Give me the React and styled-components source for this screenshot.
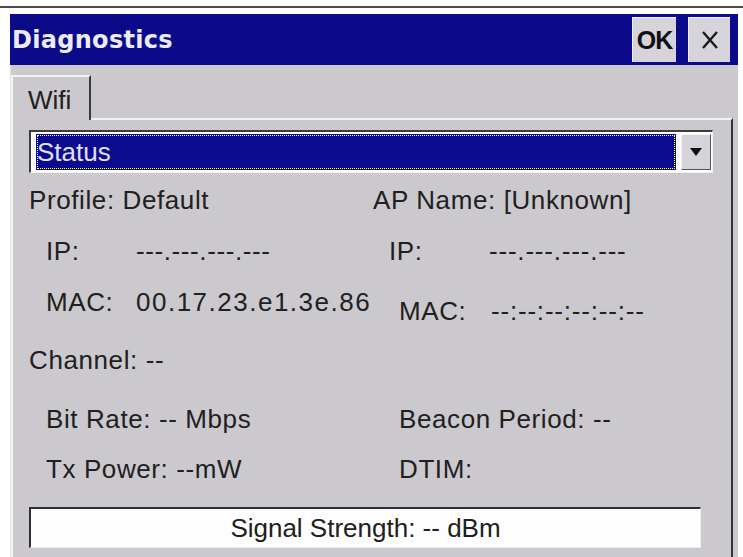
import React from "react";
import styled, { createGlobalStyle } from "styled-components";

const GlobalStyle = createGlobalStyle`
  html, body {
    margin: 0;
    padding: 0;
    background: #ffffff;
  }
  body {
    font-family: "Liberation Sans", Arial, sans-serif;
    color: #202020;
  }
`;

const Screen = styled.div`
  width: 743px;
  height: 557px;
  overflow: hidden;
  padding-top: 6px;
  box-sizing: border-box;
`;

const Window = styled.div`
  border-top: 2px solid #4c4c4c;
  padding: 6px 5px 0 10px;
  height: 100%;
  box-sizing: border-box;
  display: flex;
  flex-direction: column;
`;

const TitleBar = styled.div`
  height: 51px;
  flex: none;
  background: #0b0b8a;
  display: flex;
  align-items: center;
  justify-content: space-between;
  padding: 0 8px 0 2px;
`;

const Title = styled.span`
  font-family: "DejaVu Sans", sans-serif;
  font-weight: bold;
  font-size: 24px;
  letter-spacing: 0.3px;
  color: #ecebf7;
`;

const Buttons = styled.div`
  display: flex;
  gap: 12px;
`;

const TitleButton = styled.button`
  width: ${(p) => p.$w}px;
  height: 45px;
  padding: 0;
  margin: 0;
  background: #d6d3da;
  border: none;
  border-top: 1px solid #f2f1f4;
  border-left: 1px solid #f2f1f4;
  display: flex;
  align-items: center;
  justify-content: center;
  font-family: "Liberation Sans", Arial, sans-serif;
  font-weight: bold;
  font-size: 25px;
  letter-spacing: -1px;
  color: #111;
`;

const Body = styled.div`
  flex: 1;
  background: #ccc9ce;
  border-left: 1px solid #e4e2e6;
  padding: 10px 5px 0 0;
  display: flex;
  flex-direction: column;
`;

const Tab = styled.div`
  width: 80px;
  height: 45px;
  box-sizing: border-box;
  border-top: 2px solid #f3f2f5;
  border-left: 2px solid #f3f2f5;
  border-right: 2px solid #3a3a3a;
  background: #ccc9ce;
  display: flex;
  align-items: center;
  padding-left: 15px;
  padding-top: 3px;
  font-size: 26px;
  position: relative;
  z-index: 1;
  margin-bottom: -2px;
`;

const Panel = styled.div`
  flex: 1;
  border-top: 2px solid #f3f2f5;
  border-left: 2px solid #f3f2f5;
  border-right: 2px solid #333333;
  padding: 10px 18px 0 16px;
  display: flex;
  flex-direction: column;
`;

const Select = styled.div`
  height: 43px;
  box-sizing: border-box;
  border-top: 2px solid #3c3c3c;
  border-left: 2px solid #3c3c3c;
  border-right: 1px solid #f4f4f4;
  border-bottom: 1px solid #f4f4f4;
  background: #ffffff;
  display: flex;
  align-items: stretch;
  padding: 2px 1px 2px 5px;
  gap: 5px;
`;

const Selected = styled.div`
  flex: 1;
  background: #0b0b8e;
  outline: 1px dotted #ffffff;
  outline-offset: -2px;
  color: #e2e0f5;
  font-size: 26px;
  display: flex;
  align-items: center;
  padding-left: 1px;
`;

const DropButton = styled.div`
  width: 28px;
  background: #d6d3da;
  border: 1px solid #555;
  border-top-color: #f4f4f4;
  border-left-color: #f4f4f4;
  display: flex;
  align-items: center;
  justify-content: center;
`;

const Row = styled.div`
  height: 30px;
  margin-top: ${(p) => p.$top}px;
  display: grid;
  grid-template-columns: 344px 1fr;
  align-items: start;
  font-size: 26px;
  line-height: 30px;
  letter-spacing: 0.6px;
  white-space: nowrap;
`;

const Field = styled.div`
  display: flex;
  padding-left: ${(p) => p.$indent || 0}px;
  margin-top: ${(p) => p.$drop || 0}px;
`;

const Label = styled.span`
  width: ${(p) => (p.$w ? `${p.$w}px` : "auto")};
  flex: none;
`;

const Value = styled.span`
  letter-spacing: ${(p) => p.$ls ?? 0.6}px;
`;

const SignalBox = styled.div`
  margin-top: 23px;
  width: 672px;
  height: 41px;
  box-sizing: border-box;
  background: #fdfdfd;
  border-top: 2px solid #2e2e2e;
  border-left: 2px solid #2e2e2e;
  border-right: 1px solid #eeeeee;
  border-bottom: 1px solid #eeeeee;
  display: flex;
  align-items: center;
  justify-content: center;
  font-size: 26px;
`;

export default function App() {
  return (
    <Screen>
      <GlobalStyle />
      <Window>
        <TitleBar>
          <Title>Diagnostics</Title>
          <Buttons>
            <TitleButton $w={44}>OK</TitleButton>
            <TitleButton $w={42} aria-label="close">
              <svg width="18" height="20" viewBox="0 0 18 20">
                <path
                  d="M2 2 L16 18 M16 2 L2 18"
                  stroke="#1a1a1a"
                  strokeWidth="2.4"
                  fill="none"
                />
              </svg>
            </TitleButton>
          </Buttons>
        </TitleBar>
        <Body>
          <Tab>Wifi</Tab>
          <Panel>
            <Select>
              <Selected>Status</Selected>
              <DropButton>
                <svg width="12" height="8" viewBox="0 0 12 8">
                  <path d="M0 0 H12 L6 8 Z" fill="#111" />
                </svg>
              </DropButton>
            </Select>

            <Row $top={12}>
              <Field>Profile: Default</Field>
              <Field>AP Name: [Unknown]</Field>
            </Row>
            <Row $top={21}>
              <Field $indent={17}>
                <Label $w={90}>IP:</Label>
                <Value>---.---.---.---</Value>
              </Field>
              <Field $indent={16}>
                <Label $w={100}>IP:</Label>
                <Value $ls={0.8}>---.---.---.---</Value>
              </Field>
            </Row>
            <Row $top={21}>
              <Field $indent={17}>
                <Label $w={90}>MAC:</Label>
                <Value $ls={1.5}>00.17.23.e1.3e.86</Value>
              </Field>
              <Field $indent={26} $drop={9}>
                <Label $w={92}>MAC:</Label>
                <Value $ls={0.8}>--:--:--:--:--:--</Value>
              </Field>
            </Row>
            <Row $top={28}>
              <Field>Channel: --</Field>
            </Row>
            <Row $top={29}>
              <Field $indent={17}>Bit Rate: -- Mbps</Field>
              <Field $indent={26}>Beacon Period: --</Field>
            </Row>
            <Row $top={20}>
              <Field $indent={17}>Tx Power: --mW</Field>
              <Field $indent={26}>DTIM:</Field>
            </Row>
            <SignalBox>Signal Strength: -- dBm</SignalBox>
          </Panel>
        </Body>
      </Window>
    </Screen>
  );
}
